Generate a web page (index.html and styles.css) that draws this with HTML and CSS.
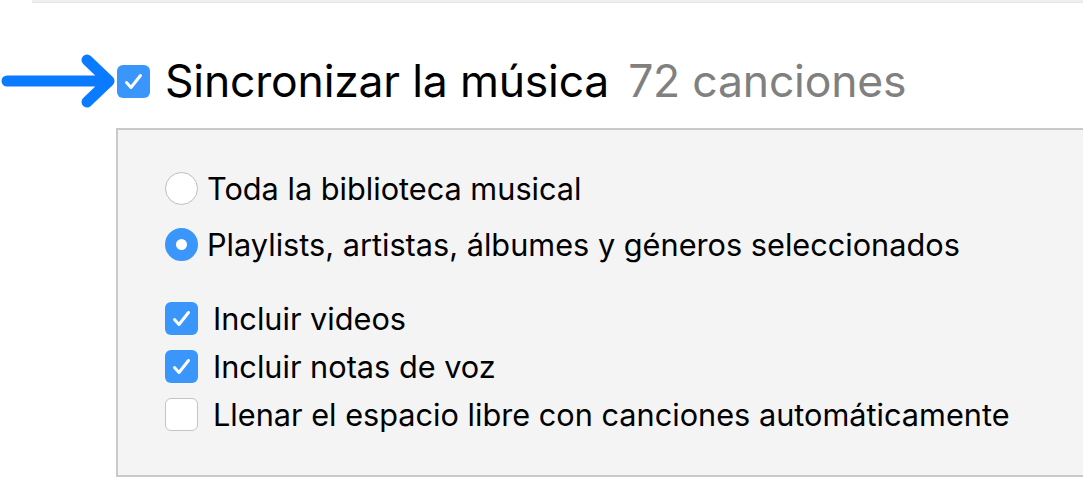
FILE: index.html
```html
<!DOCTYPE html>
<html lang="es">
<head>
<meta charset="utf-8">
<link rel="stylesheet" href="styles.css">
</head>
<body>
<div class="topbar"></div>
<div class="header">
  <svg class="arrow" width="116" height="60" viewBox="0 0 116 60">
    <path d="M7 30 H107 M87 9 L109 30 L87 51" fill="none" stroke="#0a7bff" stroke-width="11" stroke-linecap="round" stroke-linejoin="round"/>
  </svg>
  <span class="cb big checked">
    <svg viewBox="0 0 33 33" width="33" height="33"><path d="M9.5 17.5 L14 22.5 L23.5 10.5" fill="none" stroke="#fff" stroke-width="3" stroke-linecap="round" stroke-linejoin="round"/></svg>
  </span>
  <h1 class="title">Sincronizar la música</h1>
  <span class="count">72 canciones</span>
</div>
<div class="panel">
  <div class="radios">
    <label class="row radio-row"><span class="radio"></span><span>Toda la biblioteca musical</span></label>
    <label class="row radio-row"><span class="radio on"></span><span>Playlists, artistas, álbumes y géneros seleccionados</span></label>
  </div>
  <div class="checks">
    <label class="row check-row"><span class="cb checked"><svg viewBox="0 0 33 33" width="33" height="33"><path d="M9.5 17.5 L14 22.5 L23.5 10.5" fill="none" stroke="#fff" stroke-width="3" stroke-linecap="round" stroke-linejoin="round"/></svg></span><span>Incluir videos</span></label>
    <label class="row check-row"><span class="cb checked"><svg viewBox="0 0 33 33" width="33" height="33"><path d="M9.5 17.5 L14 22.5 L23.5 10.5" fill="none" stroke="#fff" stroke-width="3" stroke-linecap="round" stroke-linejoin="round"/></svg></span><span>Incluir notas de voz</span></label>
    <label class="row check-row"><span class="cb"></span><span>Llenar el espacio libre con canciones automáticamente</span></label>
  </div>
</div>
</body>
</html>
```
FILE: styles.css
```css
html, body {
  margin: 0;
  padding: 0;
  background: #fff;
  font-family: Inter, "Liberation Sans", Arial, sans-serif;
  color: #000;
  overflow: hidden;
}
.topbar {
  margin-left: 32px;
  height: 2px;
  background: #efefef;
  border-bottom: 1px solid #e4e4e4;
}
.header {
  display: flex;
  align-items: center;
  height: 60px;
  margin-top: 48px;
}
.arrow {
  display: block;
  flex: none;
}
.cb {
  width: 33px;
  height: 33px;
  box-sizing: border-box;
  border-radius: 6px;
  background: #fff;
  border: 1px solid #c4c4c4;
  flex: none;
  display: flex;
}
.cb.checked {
  background: #3a96fb;
  border: none;
}
.cb.big {
  margin-left: 1px;
}
.title {
  margin: 0 0 0 15px;
  font-size: 44.5px;
  font-weight: 400;
  letter-spacing: -0.2px;
}
.count {
  margin-left: 19px;
  font-size: 44.5px;
  color: #808080;
  letter-spacing: -0.2px;
}
.panel {
  margin-left: 116px;
  margin-top: 17px;
  height: 349px;
  background: #f4f4f4;
  border: 2px solid #c9c9c9;
  border-right: none;
  padding: 42px 0 0 47px;
  box-sizing: border-box;
}
.row {
  display: flex;
  align-items: center;
  font-size: 30.7px;
}
.radios {
  display: flex;
  flex-direction: column;
  gap: 23px;
}
.radio-row {
  height: 33px;
  gap: 9px;
}
.radio {
  width: 33px;
  height: 33px;
  box-sizing: border-box;
  border-radius: 50%;
  background: #fff;
  border: 1px solid #bdbdbd;
  flex: none;
}
.radio.on {
  border: 11px solid #3a96fb;
  background: #fff;
}
.checks {
  margin-top: 41px;
  display: flex;
  flex-direction: column;
  gap: 15px;
}
.check-row {
  height: 33px;
  gap: 15px;
}
```
